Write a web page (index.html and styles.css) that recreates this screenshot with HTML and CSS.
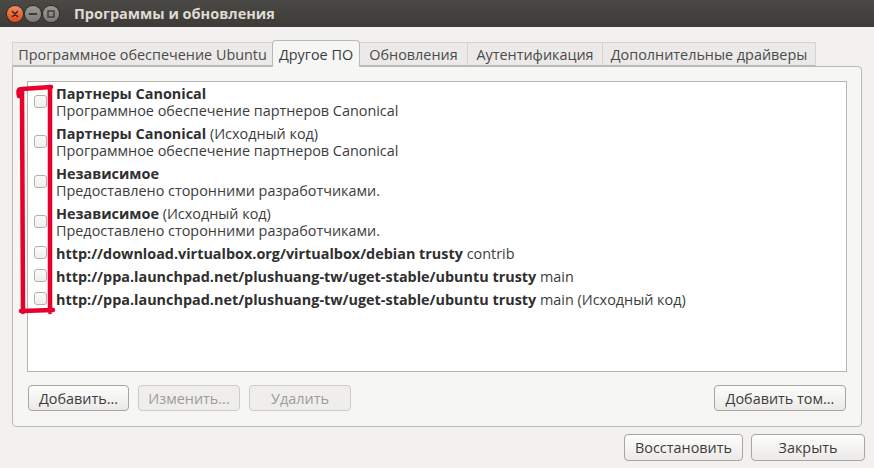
FILE: index.html
```html
<!DOCTYPE html>
<html lang="ru">
<head>
<meta charset="utf-8">
<title>Программы и обновления</title>
<link rel="stylesheet" href="styles.css">
</head>
<body>
<div class="window">
  <div class="titlebar">
    <div class="wbtns">
      <span class="wbtn close"><svg width="16" height="16" viewBox="0 0 16 16"><path d="M5.5 5.5 L10.5 10.5 M10.5 5.5 L5.5 10.5" stroke="#3a2a22" stroke-width="1.6" stroke-linecap="round"/></svg></span>
      <span class="wbtn"><svg width="16" height="16" viewBox="0 0 16 16"><path d="M4.5 8 H11.5" stroke="#3c3b37" stroke-width="1.8" stroke-linecap="round"/></svg></span>
      <span class="wbtn"><svg width="16" height="16" viewBox="0 0 16 16"><rect x="5" y="5" width="6" height="6" fill="none" stroke="#3c3b37" stroke-width="1.4"/></svg></span>
    </div>
    <div class="title">Программы и обновления</div>
  </div>
  <div class="content">
    <div class="notebook">
      <div class="tabs">
        <div class="tab t1">Программное обеспечение Ubuntu</div>
        <div class="tab active t2">Другое ПО</div>
        <div class="tab t3">Обновления</div>
        <div class="tab t4">Аутентификация</div>
        <div class="tab t5">Дополнительные драйверы</div>
      </div>
      <div class="panel">
        <div class="list">
          <div class="row two"><span class="cb"></span><div class="txt"><div><b>Партнеры Canonical</b></div><div>Программное обеспечение партнеров Canonical</div></div></div>
          <div class="row two"><span class="cb"></span><div class="txt"><div><b>Партнеры Canonical</b> (Исходный код)</div><div>Программное обеспечение партнеров Canonical</div></div></div>
          <div class="row two"><span class="cb"></span><div class="txt"><div><b>Независимое</b></div><div>Предоставлено сторонними разработчиками.</div></div></div>
          <div class="row two"><span class="cb"></span><div class="txt"><div><b>Независимое</b> (Исходный код)</div><div>Предоставлено сторонними разработчиками.</div></div></div>
          <div class="row one"><span class="cb"></span><div class="txt"><div><b>http://download.virtualbox.org/virtualbox/debian trusty</b> contrib</div></div></div>
          <div class="row one"><span class="cb"></span><div class="txt"><div><b>http://ppa.launchpad.net/plushuang-tw/uget-stable/ubuntu trusty</b> main</div></div></div>
          <div class="row one"><span class="cb"></span><div class="txt"><div><b>http://ppa.launchpad.net/plushuang-tw/uget-stable/ubuntu trusty</b> main (Исходный код)</div></div></div>
        </div>
        <div class="btnrow">
          <button class="btn b-add">Добавить...</button>
          <button class="btn b-dis" disabled>Изменить...</button>
          <button class="btn b-dis" disabled>Удалить</button>
          <span class="spacer"></span>
          <button class="btn b-vol">Добавить том...</button>
        </div>
      </div>
    </div>
    <div class="actions">
      <button class="btn b-restore">Восстановить</button>
      <button class="btn b-close">Закрыть</button>
    </div>
  </div>
  <svg class="mark" width="874" height="468" viewBox="0 0 874 468">
    <path d="M19 96 C18 91 18 89 22 89 L51 87 M50 87 L50 312 M22 90 L23 312 M21 311 L53 310" fill="none" stroke="#e8002c" stroke-width="4.5" stroke-linecap="round" stroke-linejoin="round"/>
  </svg>
</div>
</body>
</html>
```
FILE: styles.css
```css
* { box-sizing: border-box; }
html, body { margin: 0; padding: 0; }
body {
  width: 874px;
  height: 468px;
  overflow: hidden;
  background: #f2f1f0;
  font-family: "Open Sans", "DejaVu Sans", sans-serif;
  font-size: 14.4px;
  color: #3c3c3c;
}
.window { position: relative; width: 874px; height: 468px; }
.titlebar {
  height: 27px;
  background: linear-gradient(#4a4945, #3c3b37);
  display: flex;
  align-items: center;
  padding-left: 7px;
}
.wbtns { display: flex; gap: 2px; }
.wbtn {
  width: 16px; height: 16px; border-radius: 50%;
  background: linear-gradient(#9a9994, #7b7a75);
  box-shadow: 0 0 0 1px #2e2d2a;
  display: flex;
}
.wbtn.close { background: linear-gradient(#f58a5c, #df4b16); }
.title {
  margin-left: 15px;
  color: #dfdbd2;
  font-weight: bold;
  font-size: 14.5px;
}
.content { padding: 13px 9px 0 12px; }
.notebook { width: 850px; }
.tabs { display: flex; height: 26px; align-items: flex-end; position: relative; z-index: 1; }
.tab {
  height: 24px;
  padding: 0 4px;
  display: flex;
  align-items: center;
  justify-content: center;
  white-space: nowrap;
  background: #ebeae8;
  border-top: 1px solid #d6d4d1;
  border-left: 1px solid #d6d4d1;
  color: #4a4a4a;
  border-bottom: 1px solid #bcb9b5;
  flex: none;
}
.tab.t1 { width: 260px; }
.tab.t2 { width: 88px; }
.tab.t3 { width: 107px; }
.tab.t4 { width: 135px; }
.tab.t5 { width: 214px; border-right: 1px solid #d6d4d1; }
.tab.active {
  height: 27px;
  background: #f6f6f5;
  border: 1px solid #bcb9b5;
  border-bottom: none;
  border-radius: 4px 4px 0 0;
  color: #3c3c3c;
  margin-bottom: -1px;
}
.tab.active + .tab { border-left: none; }
.panel {
  height: 361px;
  background: #f6f6f5;
  border: 1px solid #bcb9b5;
  border-radius: 0 4px 4px 4px;
  padding: 14px 14px 0 14px;
}
.list {
  width: 820px;
  height: 291px;
  background: #ffffff;
  border: 1px solid #b8b5b1;
  padding-top: 0;
}
.row { display: flex; align-items: center; padding-left: 6px; }
.row.two { height: 40px; }
.row.one { height: 23px; }
.cb {
  width: 13px; height: 13px;
  border: 1px solid #b3b0ac;
  border-radius: 3px;
  background: linear-gradient(#fbfbfb, #efefee);
  margin-right: 9px;
  flex: none;
  position: relative;
  top: -1px;
}
.txt { line-height: 17px; color: #3c3c3c; white-space: nowrap; }
.txt b { font-weight: bold; color: #2f2f2f; }
.btnrow { display: flex; gap: 9px; margin-top: 13px; padding-left: 1px; }
.spacer { flex: 1; }
.btn {
  height: 26px;
  font-family: inherit;
  font-size: 14.4px;
  color: #3c3c3c;
  border: 1px solid #a9a5a0;
  border-radius: 4px;
  background: linear-gradient(#fdfdfc, #ebeae8);
  padding: 0;
}
.b-add { width: 101px; }
.b-dis { width: 102px; color: #9b9b9b; border-color: #cfcbc7; background: #efeeec; }
.b-vol { width: 132px; margin-right: 1px; }
.actions { display: flex; justify-content: flex-end; gap: 8px; margin-top: 7px; }
.btn.b-restore { width: 119px; height: 27px; }
.btn.b-close { width: 114px; height: 27px; }
.mark { position: absolute; left: 0; top: 0; pointer-events: none; }
```
